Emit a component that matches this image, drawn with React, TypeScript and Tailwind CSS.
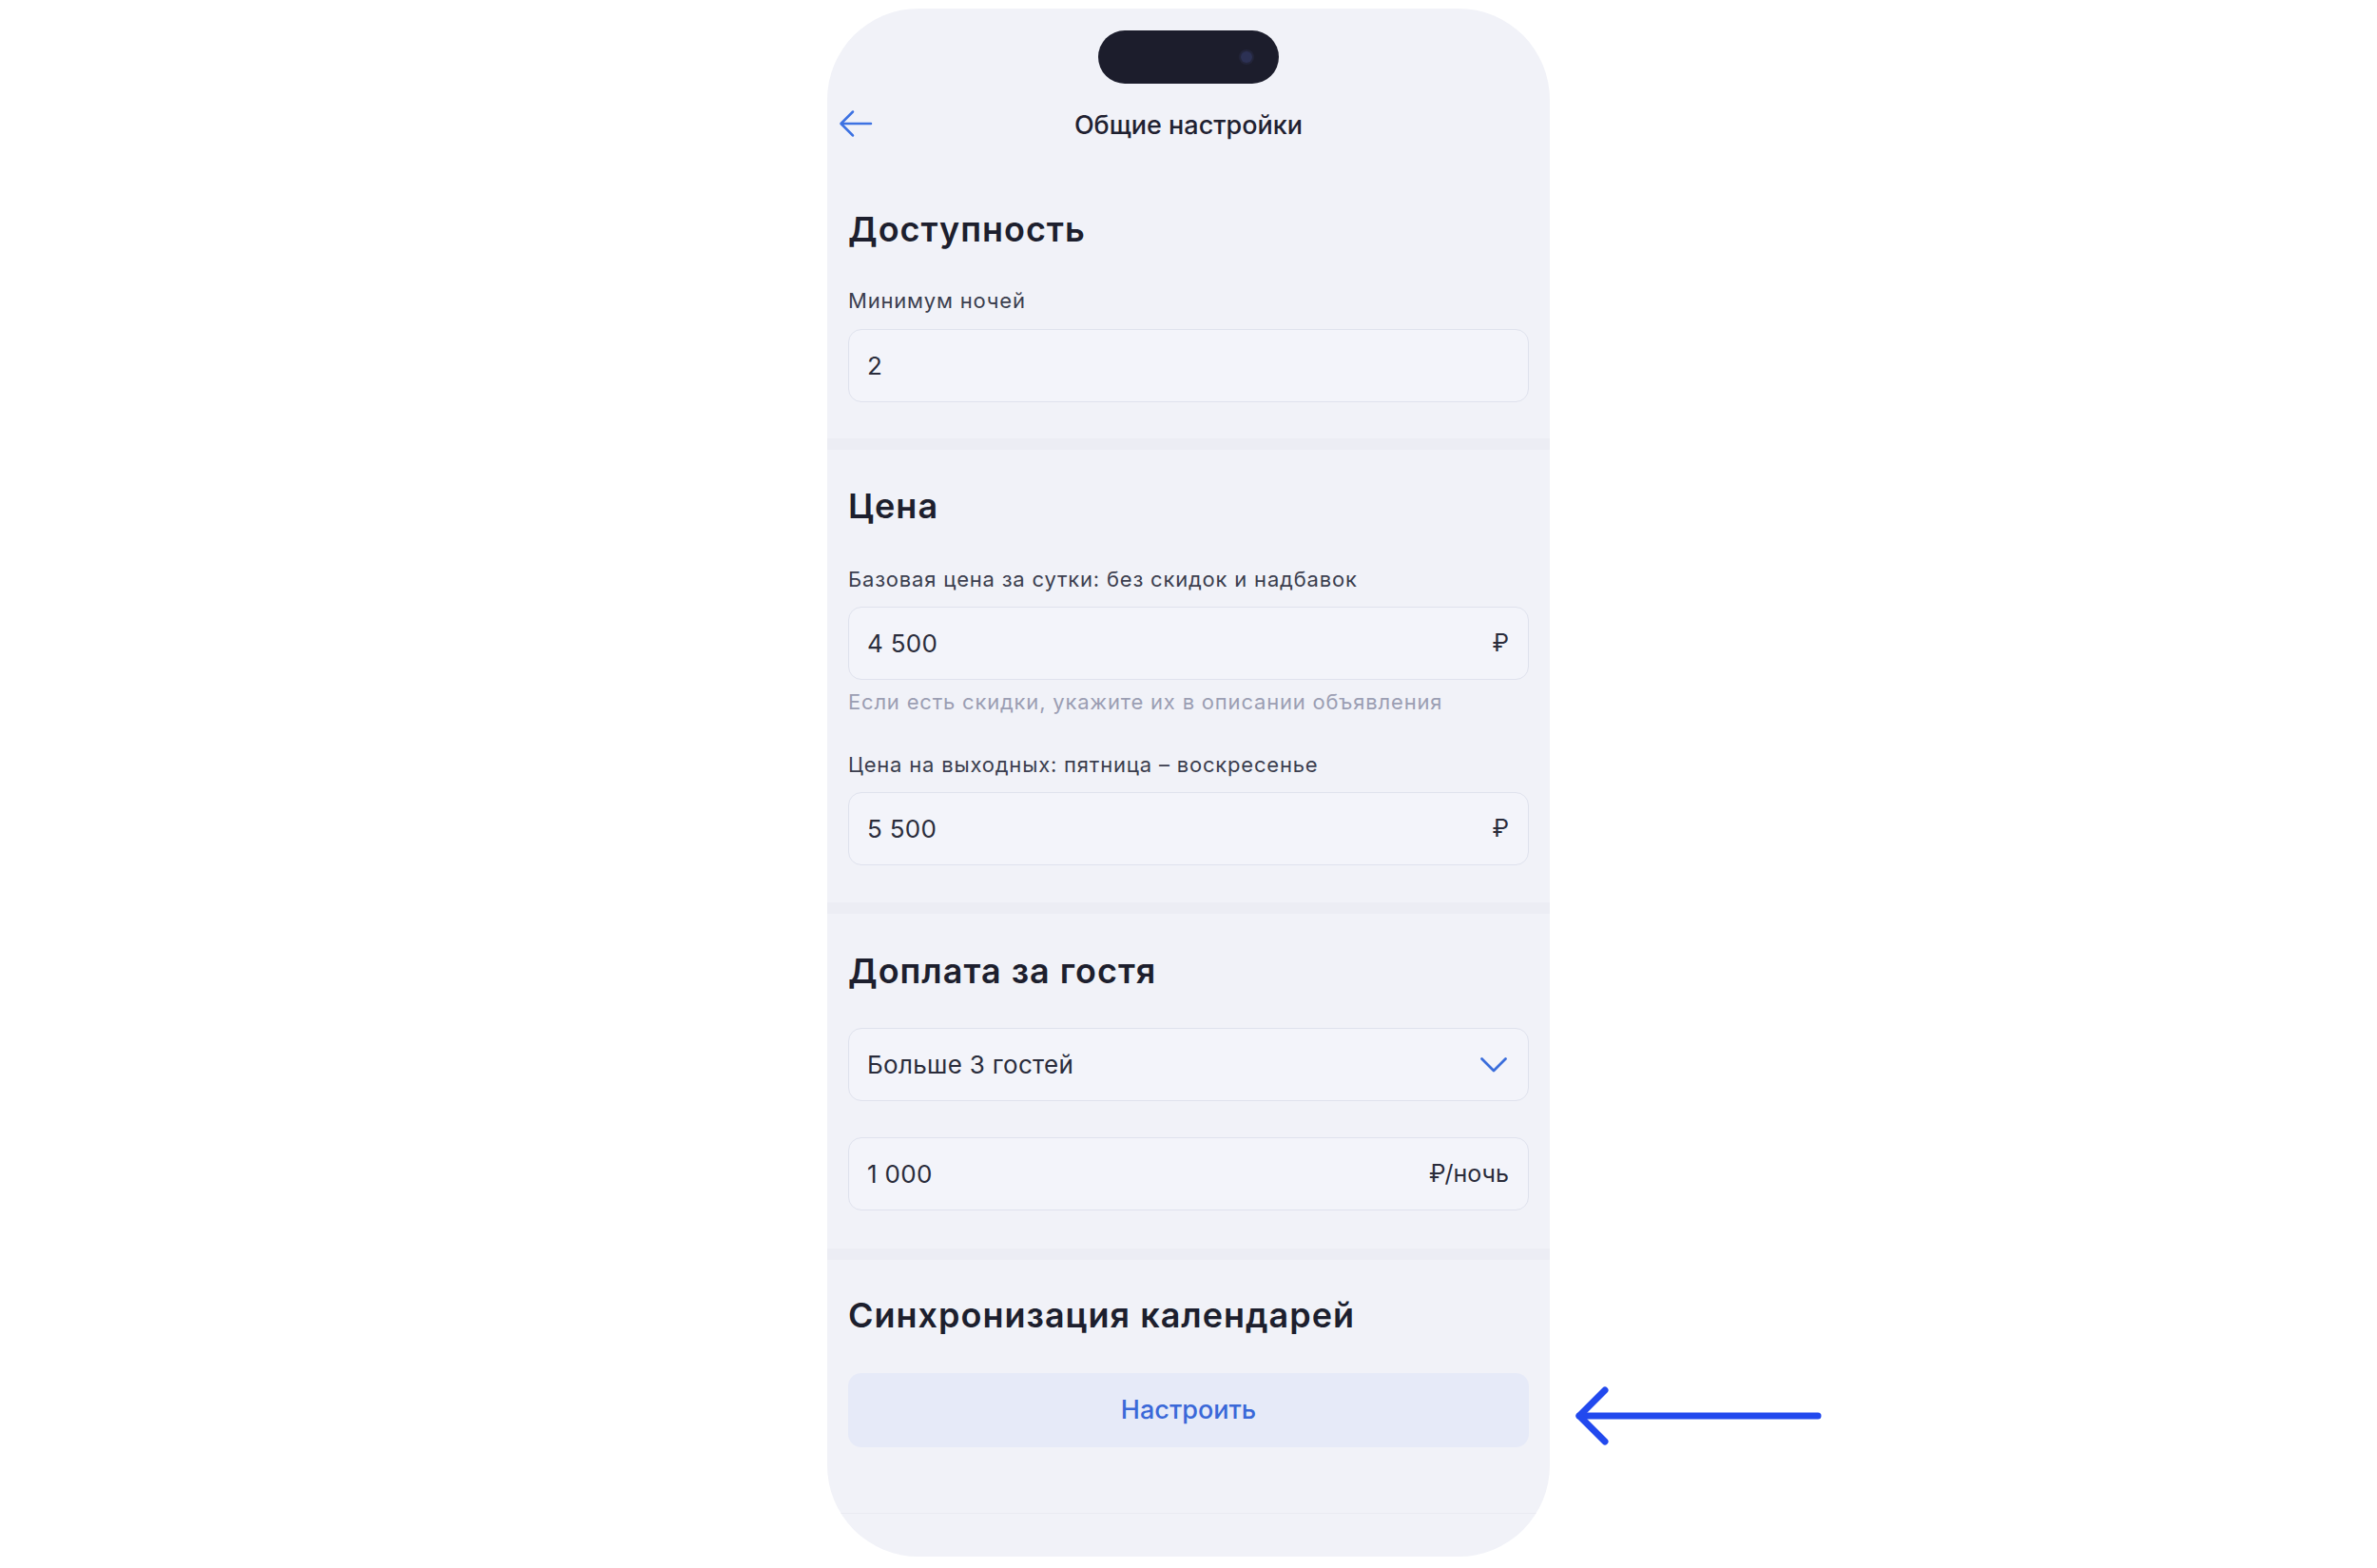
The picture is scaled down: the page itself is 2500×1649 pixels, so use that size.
import React from "react";

const FONT = { fontFamily: "Inter, 'Noto Sans', 'Liberation Sans', sans-serif" };

function BackArrow() {
  return (
    <svg width="36" height="32" viewBox="0 0 36 32" fill="none">
      <path d="M34 16H3" stroke="#3d72e2" strokeWidth="2.5" strokeLinecap="round" />
      <path d="M15 3.5L2.5 16L15 28.5" stroke="#3d72e2" strokeWidth="2.5" strokeLinecap="round" strokeLinejoin="round" />
    </svg>
  );
}

function Chevron() {
  return (
    <svg width="30" height="18" viewBox="0 0 30 18" fill="none">
      <path d="M2.5 2.5L15 15L27.5 2.5" stroke="#3a6ddb" strokeWidth="2.8" strokeLinecap="round" strokeLinejoin="round" />
    </svg>
  );
}

function Field({ value, suffix }: { value: string; suffix?: string }) {
  return (
    <div className="flex h-[77px] items-center justify-between rounded-[14px] border-[1.5px] border-[#dfe2ed] bg-[#f3f4fa] pl-[19px] pr-[20px]">
      <span className="text-[26px] tracking-[0.3px] text-[#2a2c3b]">{value}</span>
      {suffix && <span className="text-[25px] text-[#2a2c3b]">{suffix}</span>}
    </div>
  );
}

function Label({ children }: { children: React.ReactNode }) {
  return <div className="text-[22px] leading-[28px] tracking-[0.8px] text-[#3b3e4e]">{children}</div>;
}

function Heading({ children }: { children: React.ReactNode }) {
  return <h2 className="text-[36px] font-semibold leading-[40px] tracking-[1px] text-[#1d1f2e]">{children}</h2>;
}

function Divider() {
  return <div className="h-[12px] bg-[#ecedf4]" />;
}

export default function App() {
  return (
    <div className="relative flex h-[1649px] w-full justify-center bg-white pt-[9px]" style={FONT}>
      <div className="flex h-[1628px] w-[760px] flex-col overflow-hidden rounded-[96px] bg-[#f1f2f8]">
        {/* status area with the camera cut-out */}
        <div className="mt-[23px] flex justify-center">
          <div className="relative flex h-[56px] w-[190px] items-center justify-end rounded-full bg-[#1c1d2c] pr-[28px]">
            <div className="h-[12px] w-[12px] rounded-full bg-[#2c3154] ring-2 ring-[#23253a]" />
          </div>
        </div>

        {/* top bar */}
        <div className="relative mt-[12px] flex h-[64px] items-center justify-center">
          <div className="absolute left-[12px] top-[14px]">
            <BackArrow />
          </div>
          <div className="text-[27px] font-medium text-[#1f2131]">Общие настройки</div>
        </div>

        {/* availability */}
        <section className="px-[22px] pb-[38px] pt-[57px]">
          <Heading>Доступность</Heading>
          <div className="mt-[41px]">
            <Label>Минимум ночей</Label>
          </div>
          <div className="mt-[16px]">
            <Field value="2" />
          </div>
        </section>
        <Divider />

        {/* price */}
        <section className="px-[22px] pb-[39px] pt-[39px]">
          <Heading>Цена</Heading>
          <div className="mt-[43px]">
            <Label>Базовая цена за сутки: без скидок и надбавок</Label>
          </div>
          <div className="mt-[15px]">
            <Field value="4 500" suffix="₽" />
          </div>
          <div className="mt-[9px] text-[22px] leading-[28px] tracking-[0.8px] text-[#9b9eb3]">
            Если есть скидки, укажите их в описании объявления
          </div>
          <div className="mt-[38px]">
            <Label>Цена на выходных: пятница – воскресенье</Label>
          </div>
          <div className="mt-[15px]">
            <Field value="5 500" suffix="₽" />
          </div>
        </section>
        <Divider />

        {/* extra guest fee */}
        <section className="px-[22px] pb-[40px] pt-[40px]">
          <Heading>Доплата за гостя</Heading>
          <div className="mt-[40px] flex h-[77px] items-center justify-between rounded-[14px] border-[1.5px] border-[#dfe2ed] bg-[#f3f4fa] pl-[19px] pr-[21px]">
            <span className="text-[26px] tracking-[0.3px] text-[#2a2c3b]">Больше 3 гостей</span>
            <Chevron />
          </div>
          <div className="mt-[38px]">
            <Field value="1 000" suffix="₽/ночь" />
          </div>
        </section>
        <Divider />

        {/* calendar sync */}
        <section className="px-[22px] pb-[69px] pt-[38px]">
          <Heading>Синхронизация календарей</Heading>
          <button className="mt-[41px] flex h-[78px] w-full items-center justify-center rounded-[14px] bg-[#e6eaf8] text-[27px] font-medium text-[#3a68d8]">
            Настроить
          </button>
        </section>
        <div className="h-px bg-[#e9eaf2]" />
        <div className="flex-1" />
      </div>

      {/* pointer towards the button */}
      <svg className="absolute left-[1652px] top-[1455px]" width="268" height="68" viewBox="0 0 268 68" fill="none">
        <path d="M9 34H260" stroke="#2249ee" strokeWidth="7" strokeLinecap="round" />
        <path d="M36 7L9 34L36 61" stroke="#2249ee" strokeWidth="7" strokeLinecap="round" strokeLinejoin="round" />
      </svg>
    </div>
  );
}
